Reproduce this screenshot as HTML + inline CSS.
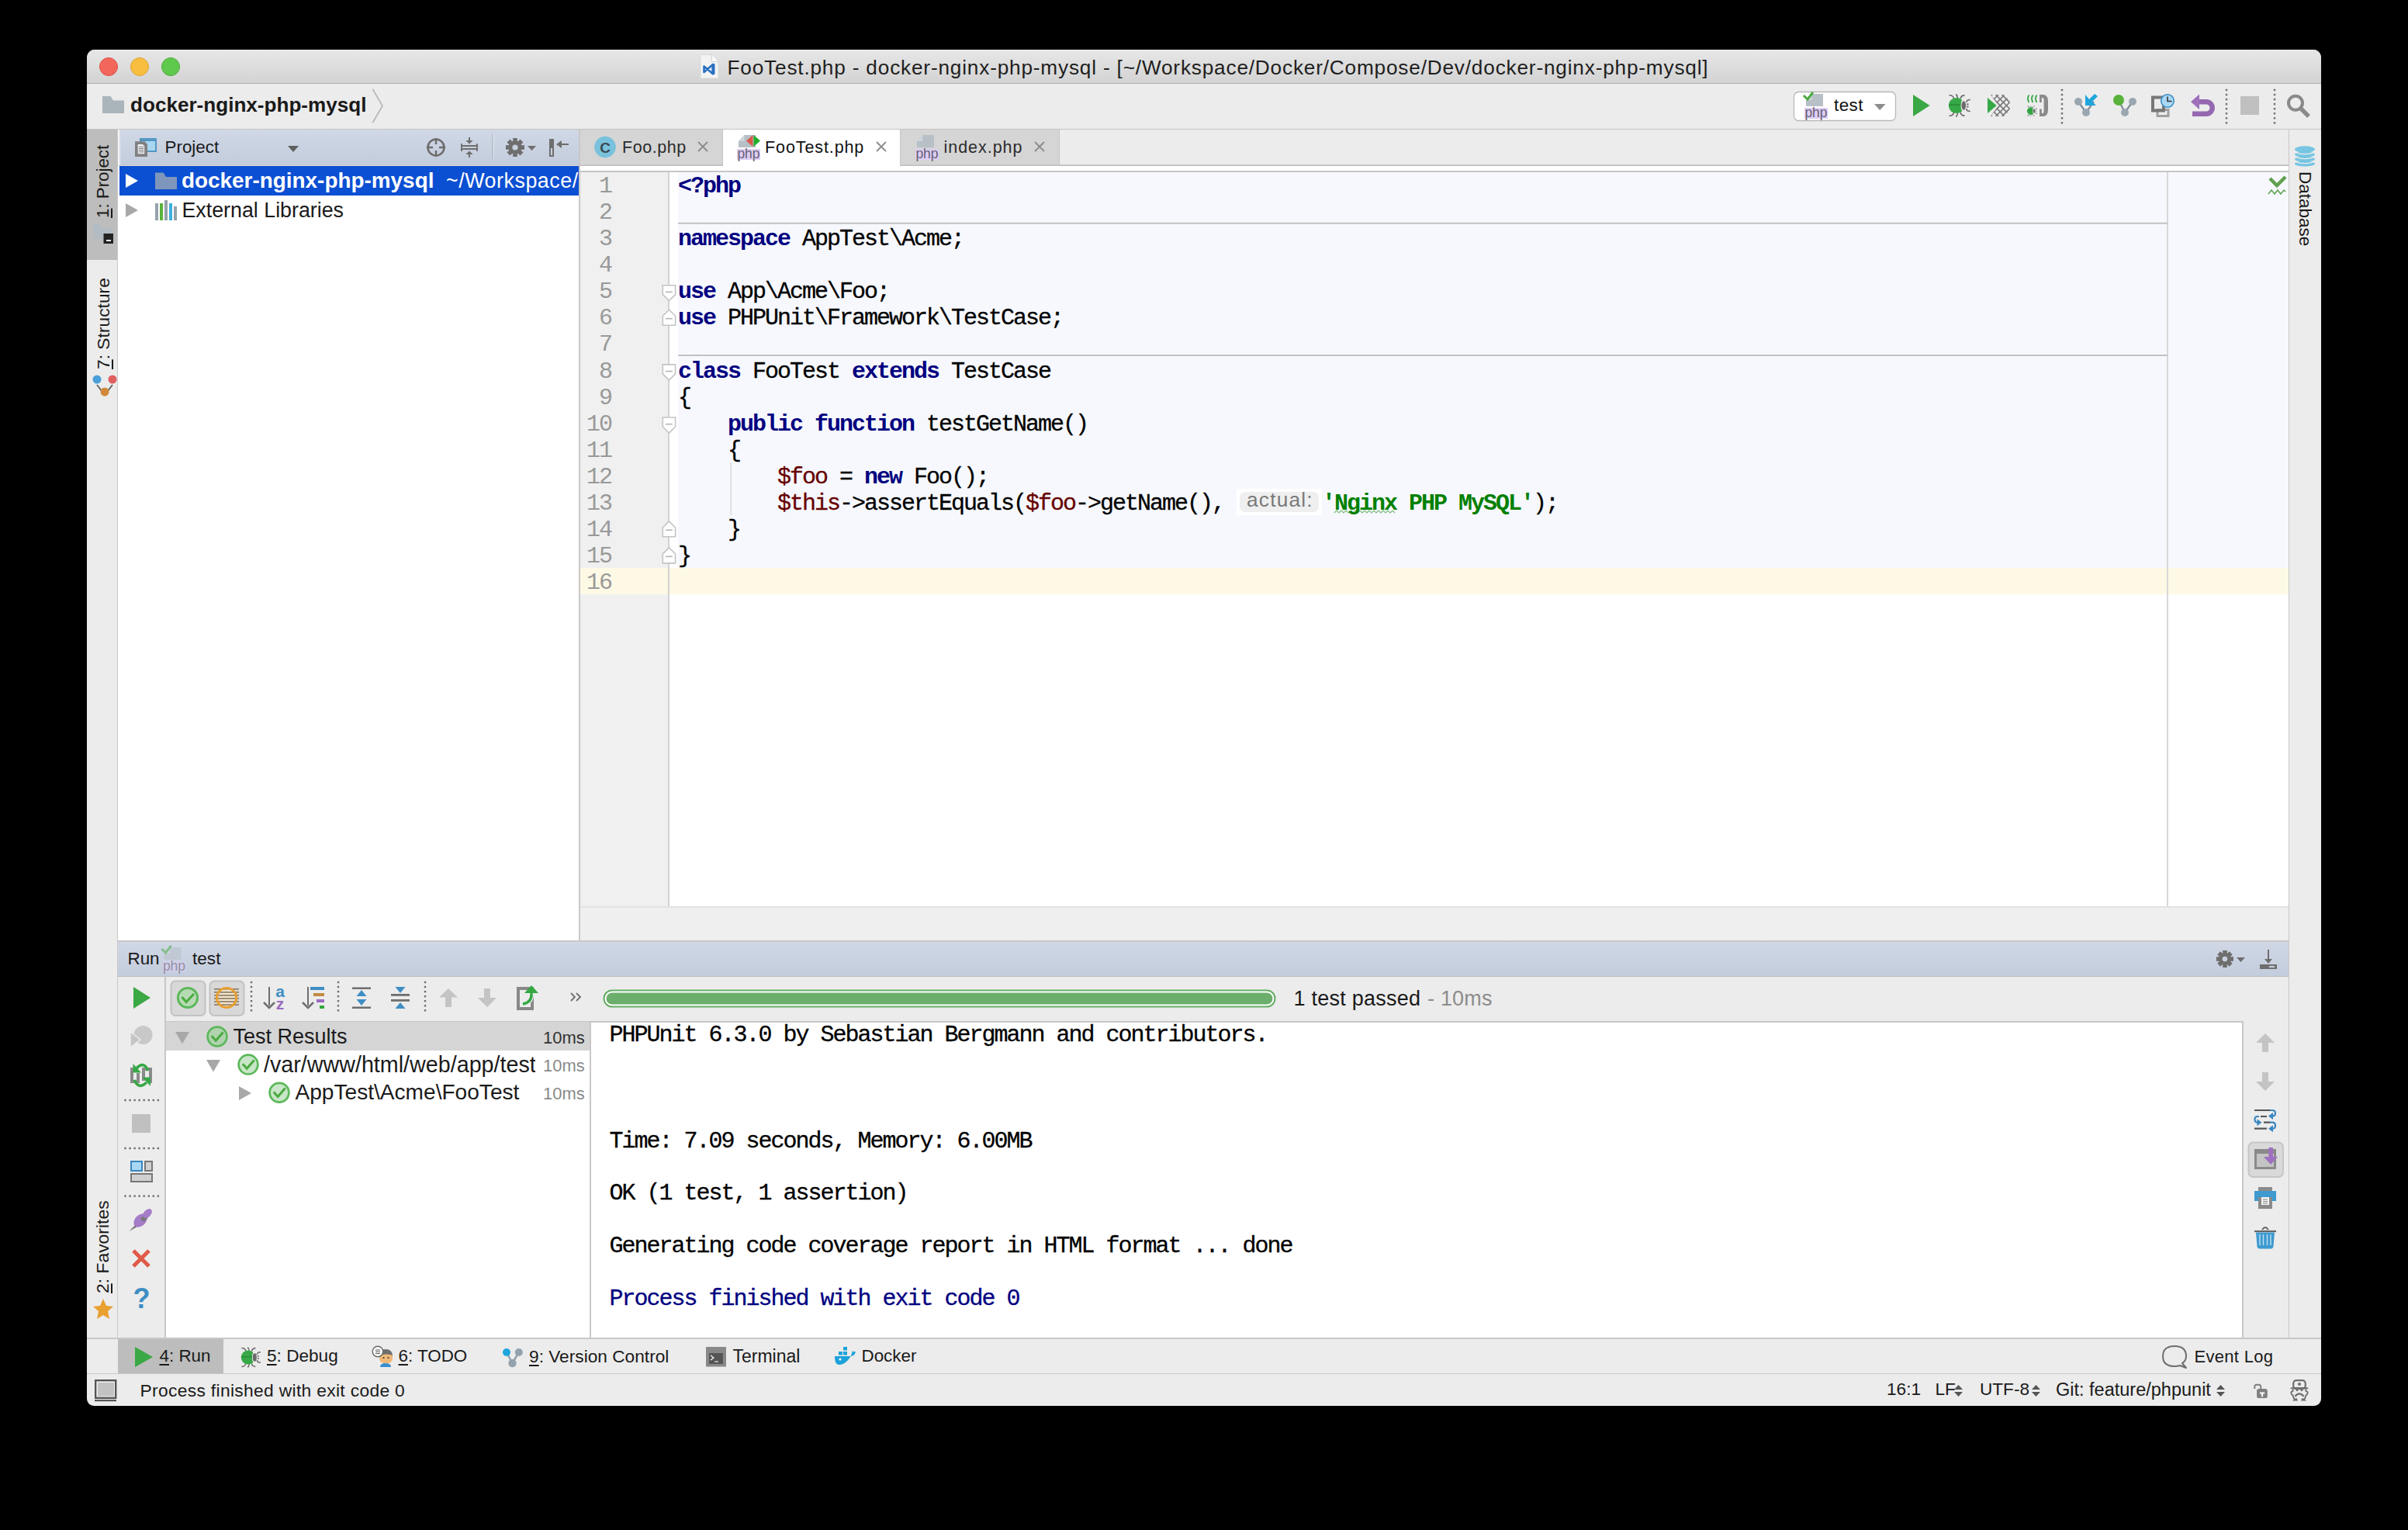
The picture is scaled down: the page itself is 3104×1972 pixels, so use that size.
<!DOCTYPE html>
<html><head><meta charset="utf-8">
<style>
html,body{margin:0;padding:0;background:#000;width:3104px;height:1972px;overflow:hidden}
*{box-sizing:border-box}
.a{position:absolute}
body{font-family:"Liberation Sans",sans-serif;color:#1a1a1a}
.t{position:absolute;white-space:pre;line-height:1}
.mono{font-family:"Liberation Mono",monospace;-webkit-text-stroke:0.3px currentColor}
.kw{color:#000080;font-weight:bold;-webkit-text-stroke:0}
.vr{color:#660000}
.st{color:#008000;font-weight:bold;-webkit-text-stroke:0}
</style></head>
<body>
<div class="a" style="left:112px;top:64px;width:2880px;height:1748px;background:#ececec;border-radius:10px 10px 9px 9px;overflow:hidden">
<div class="a" style="left:0;top:0;width:2880px;height:44px;background:linear-gradient(#e7e7e7,#d3d3d3);border-bottom:1px solid #b1b1b1"></div>
</div>
<div class="a" style="left:128px;top:74px;width:24px;height:24px;background:#f2665b;border-radius:50%;border:1px solid #df5045"></div>
<div class="a" style="left:168px;top:74px;width:24px;height:24px;background:#f8be3f;border-radius:50%;border:1px solid #dfa237"></div>
<div class="a" style="left:208px;top:74px;width:24px;height:24px;background:#5fc94d;border-radius:50%;border:1px solid #4bab3b"></div>
<div class="a" style="left:112px;top:166px;width:2880px;height:1px;background:#c4c4c4;"></div>
<div class="a" style="left:151px;top:167px;width:1px;height:1558px;background:#c8c8c8;"></div>
<div class="a" style="left:112px;top:167px;width:39px;height:168px;background:#bdbdbd;"></div>
<div class="a" style="left:152px;top:167px;width:594px;height:46px;background:linear-gradient(#d0d8e6,#c3ccdc);"></div>
<div class="a" style="left:152px;top:213px;width:594px;height:1px;background:#d6d2cc;"></div>
<div class="a" style="left:152px;top:167px;width:1.5px;height:46px;background:#f4f4f4;"></div>
<div class="a" style="left:153.5px;top:167px;width:2.5px;height:46px;background:#d3dae8;"></div>
<div class="a" style="left:152px;top:214px;width:594px;height:998px;background:#fff;"></div>
<div class="a" style="left:153.5px;top:214px;width:592.5px;height:38px;background:#0b4fd3;"></div>
<div class="a" style="left:746px;top:167px;width:2px;height:1047px;background:#c8c8c8;"></div>
<div class="a" style="left:748px;top:213px;width:2202px;height:1px;background:#c2c2c2;"></div>
<div class="a" style="left:748px;top:212px;width:2202px;height:1px;background:#c8c8c8;"></div>
<div class="a" style="left:748px;top:167px;width:183px;height:45px;background:#d5d5d5;"></div>
<div class="a" style="left:931px;top:167px;width:1px;height:45px;background:#c6c6c6;"></div>
<div class="a" style="left:932px;top:167px;width:228px;height:48px;background:#fff;"></div>
<div class="a" style="left:1160px;top:167px;width:1px;height:45px;background:#c6c6c6;"></div>
<div class="a" style="left:1161px;top:167px;width:204px;height:45px;background:#d5d5d5;"></div>
<div class="a" style="left:1365px;top:167px;width:1px;height:45px;background:#c6c6c6;"></div>
<div class="a" style="left:748px;top:214px;width:2202px;height:6px;background:#fff;"></div>
<div class="a" style="left:932px;top:212px;width:228px;height:2px;background:#fff;"></div>
<div class="a" style="left:748px;top:220px;width:2202px;height:2px;background:#c6c6c6;"></div>
<div class="a" style="left:748px;top:222px;width:2202px;height:946px;background:#fff;"></div>
<div class="a" style="left:748px;top:222px;width:113px;height:946px;background:#f0f0f0;"></div>
<div class="a" style="left:861px;top:222px;width:2px;height:946px;background:#d2d2d2;"></div>
<div class="a" style="left:874px;top:222px;width:2076px;height:510px;background:#f6f8fd;"></div>
<div class="a" style="left:748px;top:732px;width:2202px;height:34px;background:#fef9e5;"></div>
<div class="a" style="left:861px;top:732px;width:2px;height:34px;background:#d2d2d2;"></div>
<div class="a" style="left:2793px;top:222px;width:2px;height:946px;background:#d8d8d8;"></div>
<div class="a" style="left:748px;top:1168px;width:2202px;height:2px;background:#e2e2e2;"></div>
<div class="a" style="left:748px;top:1170px;width:2202px;height:42px;background:#efefef;"></div>
<div class="a" style="left:861px;top:1170px;width:0px;height:0px;background:#000;"></div>
<div class="a" style="left:2950px;top:167px;width:1px;height:1558px;background:#c8c8c8;"></div>
<div class="a" style="left:152px;top:1212px;width:2798px;height:2px;background:#c8c8c8;"></div>
<div class="a" style="left:152px;top:1214px;width:2798px;height:45px;background:linear-gradient(#d0d8e6,#c3ccdc);"></div>
<div class="a" style="left:152px;top:1257.5px;width:2798px;height:1.5px;background:#bcbcbc;"></div>
<div class="a" style="left:212px;top:1259px;width:2px;height:466px;background:#c8c8c8;"></div>
<div class="a" style="left:214px;top:1316px;width:546px;height:1px;background:#c8c8c8;"></div>
<div class="a" style="left:214px;top:1317px;width:546px;height:408px;background:#fff;"></div>
<div class="a" style="left:214px;top:1317px;width:546px;height:37px;background:#d5d5d5;"></div>
<div class="a" style="left:760px;top:1316px;width:2px;height:409px;background:#c8c8c8;"></div>
<div class="a" style="left:762px;top:1316px;width:2128px;height:2px;background:#c8c8c8;"></div>
<div class="a" style="left:762px;top:1318px;width:2128px;height:407px;background:#fff;"></div>
<div class="a" style="left:2890px;top:1316px;width:2px;height:409px;background:#c8c8c8;"></div>
<div class="a" style="left:112px;top:1724px;width:2880px;height:2px;background:#c8c8c8;"></div>
<div class="a" style="left:152px;top:1726px;width:136px;height:44px;background:#bdbdbd;"></div>
<div class="a" style="left:112px;top:1770px;width:2880px;height:1px;background:#c8c8c8;"></div>
<svg class="a" style="left:0;top:0" width="3104" height="1972" viewBox="0 0 3104 1972"><path d="M903,70.5 L917.2,70.5 L926,79.6 L926,101 L903,101 Z" fill="#f3f3f3" stroke="#d6d6d6" stroke-width="0.8"/><path d="M917.2,70.5 L917.5,79.3 L926,79.6" fill="#fbfbfb" stroke="#c8c8c8" stroke-width="0.8"/><path d="M907.5,85.5 L907.5,93 L919,83 L919,95.3 Z" fill="none" stroke="#2a70c0" stroke-width="2.6" stroke-linejoin="round"/><rect x="917.5" y="82" width="4" height="14" rx="1.5" fill="#2a70c0"/><path d="M132,124 L142.64,124 L146.0,129.544 L160,129.544 L160,146 L132,146 Z" fill="#aab4bb"/><path d="M480.5,115 L493,136.5 L480.5,158" fill="none" stroke="#b4b4b4" stroke-width="1.6"/><rect x="2312.5" y="118.5" width="131" height="37" rx="6" fill="#fff" stroke="#b8b8b8" stroke-width="1.3"/><path d="M2328,129 L2335.5,121 L2350,121 L2350,137 L2328,137 Z" fill="#b7c0c7"/><path d="M2328,129 L2335.5,121 L2335.5,129 Z" fill="#cfd5da"/><rect x="2326" y="139" width="30" height="14" fill="#dccdf5"/><text x="2341" y="150.5" font-family="Liberation Sans" font-size="17.5" fill="#67606f" text-anchor="middle">php</text><path d="M2325,123 L2330,128 L2337,119" fill="none" stroke="#4aab3f" stroke-width="3"/><path d="M2416,134 L2430.5,134 L2423.2,142 Z" fill="#8c8c8c"/><path d="M2466,122 L2487.6,136 L2466,150 Z" fill="#3aa844"/><g transform="translate(2511,121) scale(1.0)"><path d="M1.5,1.8 q5,-0.5 6.5,5 M10.3,0.5 q2.2,2 2.3,5.5 M21.5,1.8 q-4.5,0 -5.5,4.5 M1.5,28.2 q5,0.5 6.5,-5 M10.3,29.5 q2.2,-2 2.3,-5.5 M21.5,28.2 q-4.5,0 -5.5,-4.5" fill="none" stroke="#6e6e6e" stroke-width="1.7"/><circle cx="11" cy="15" r="10.1" fill="#36a846"/><rect x="1" y="13.4" width="19" height="1.6" fill="#2a8c38"/><ellipse cx="21.5" cy="15" rx="5" ry="9.5" fill="#ececec"/><ellipse cx="20.3" cy="15" rx="2.8" ry="5.8" fill="#6b6b6b"/><path d="M23.8,11 q0,-3.5 5,-3.5 M23.8,19 q0,3.5 5,3.5 M24,13.4 h2.6 M24,16.6 h2.6" fill="none" stroke="#6e6e6e" stroke-width="1.7"/></g><path d="M2562,126 L2573.7,136 L2562,146 Z" fill="#36a846"/><clipPath id="covc"><path d="M2566,122 L2583,122 L2590.5,130 L2590.5,142 L2583,150 L2566,150 L2576,136 Z"/></clipPath><g clip-path="url(#covc)" stroke="#7a7a7a" stroke-width="1.7"><path d="M2540.0,122 l28,28 M2540.0,150 l28,-28"/><path d="M2548.1,122 l28,28 M2548.1,150 l28,-28"/><path d="M2556.2,122 l28,28 M2556.2,150 l28,-28"/><path d="M2564.3,122 l28,28 M2564.3,150 l28,-28"/><path d="M2572.4,122 l28,28 M2572.4,150 l28,-28"/><path d="M2580.5,122 l28,28 M2580.5,150 l28,-28"/><path d="M2588.6,122 l28,28 M2588.6,150 l28,-28"/><path d="M2596.7,122 l28,28 M2596.7,150 l28,-28"/></g><rect x="2629" y="122" width="2.8" height="10" fill="#8a8a8a"/><rect x="2629" y="140.5" width="2.8" height="9.5" fill="#8a8a8a"/><path d="M2631,122 h2.5 q6.5,0 6.5,8.5 v11 q0,8.5 -6.5,8.5 h-2.5 v-4 h2 q1.6,0 1.6,-2.5 v-15 q0,-2.5 -1.6,-2.5 h-2 z" fill="#8a8a8a"/><path d="M2615.5,122.5 q-3,4.5 0,9.5 M2620.5,122.5 q-3,4.5 0,9.5 M2625.5,122.5 q-3,4.5 0,9.5" fill="none" stroke="#36a846" stroke-width="1.8"/><g transform="translate(2612.5,136) scale(0.47)"><path d="M1.5,1.8 q5,-0.5 6.5,5 M10.3,0.5 q2.2,2 2.3,5.5 M21.5,1.8 q-4.5,0 -5.5,4.5 M1.5,28.2 q5,0.5 6.5,-5 M10.3,29.5 q2.2,-2 2.3,-5.5 M21.5,28.2 q-4.5,0 -5.5,-4.5" fill="none" stroke="#6e6e6e" stroke-width="1.7"/><circle cx="11" cy="15" r="10.1" fill="#36a846"/><rect x="1" y="13.4" width="19" height="1.6" fill="#2a8c38"/><ellipse cx="21.5" cy="15" rx="5" ry="9.5" fill="#ececec"/><ellipse cx="20.3" cy="15" rx="2.8" ry="5.8" fill="#6b6b6b"/><path d="M23.8,11 q0,-3.5 5,-3.5 M23.8,19 q0,3.5 5,3.5 M24,13.4 h2.6 M24,16.6 h2.6" fill="none" stroke="#6e6e6e" stroke-width="1.7"/></g><rect x="2656.80" y="114.80" width="2.4" height="2.4" fill="#6e6e6e"/><rect x="2656.80" y="120.85" width="2.4" height="2.4" fill="#6e6e6e"/><rect x="2656.80" y="126.90" width="2.4" height="2.4" fill="#6e6e6e"/><rect x="2656.80" y="132.95" width="2.4" height="2.4" fill="#6e6e6e"/><rect x="2656.80" y="139.00" width="2.4" height="2.4" fill="#6e6e6e"/><rect x="2656.80" y="145.05" width="2.4" height="2.4" fill="#6e6e6e"/><rect x="2656.80" y="151.10" width="2.4" height="2.4" fill="#6e6e6e"/><rect x="2656.80" y="157.15" width="2.4" height="2.4" fill="#6e6e6e"/><path d="M2679,131 L2689,145 L2699,131" fill="none" stroke="#7f8d97" stroke-width="2.2"/><circle cx="2679" cy="131" r="5" fill="#9aa7b0"/><circle cx="2689" cy="145" r="5" fill="#9aa7b0"/><path d="M2688,122 L2688,136 L2702,136 L2697,131 L2704,124 L2700,121 L2693,128 Z" fill="#1ea5dc"/><path d="M2731,129 L2739,145 L2749,131" fill="none" stroke="#7f8d97" stroke-width="2.2"/><circle cx="2731" cy="129" r="7" fill="#59b33a"/><circle cx="2749" cy="131" r="5" fill="#9aa7b0"/><circle cx="2739" cy="145" r="5" fill="#9aa7b0"/><path d="M2781,141.5 h14 v8 h-14 z" fill="none" stroke="#a0a0a0" stroke-width="3"/><rect x="2775" y="125.5" width="14" height="17" fill="none" stroke="#777" stroke-width="4"/><circle cx="2794" cy="130" r="8.3" fill="#a8d8f5" stroke="#3d8fc4" stroke-width="1.6"/><path d="M2794,124.5 L2794,130.5 L2799.5,130.5" fill="none" stroke="#333" stroke-width="1.6"/><path d="M2833,131.3 H2844 A7.7,7.7 0 0 1 2844,146.7 H2826" fill="none" stroke="#9467b0" stroke-width="6.5"/><path d="M2824,131.3 L2835,121.5 L2835,141 Z" fill="#9f70bb"/><rect x="2868.80" y="114.80" width="2.4" height="2.4" fill="#6e6e6e"/><rect x="2868.80" y="120.85" width="2.4" height="2.4" fill="#6e6e6e"/><rect x="2868.80" y="126.90" width="2.4" height="2.4" fill="#6e6e6e"/><rect x="2868.80" y="132.95" width="2.4" height="2.4" fill="#6e6e6e"/><rect x="2868.80" y="139.00" width="2.4" height="2.4" fill="#6e6e6e"/><rect x="2868.80" y="145.05" width="2.4" height="2.4" fill="#6e6e6e"/><rect x="2868.80" y="151.10" width="2.4" height="2.4" fill="#6e6e6e"/><rect x="2868.80" y="157.15" width="2.4" height="2.4" fill="#6e6e6e"/><rect x="2888" y="124" width="24" height="24" fill="#c0c0c0"/><rect x="2930.80" y="114.80" width="2.4" height="2.4" fill="#6e6e6e"/><rect x="2930.80" y="120.85" width="2.4" height="2.4" fill="#6e6e6e"/><rect x="2930.80" y="126.90" width="2.4" height="2.4" fill="#6e6e6e"/><rect x="2930.80" y="132.95" width="2.4" height="2.4" fill="#6e6e6e"/><rect x="2930.80" y="139.00" width="2.4" height="2.4" fill="#6e6e6e"/><rect x="2930.80" y="145.05" width="2.4" height="2.4" fill="#6e6e6e"/><rect x="2930.80" y="151.10" width="2.4" height="2.4" fill="#6e6e6e"/><rect x="2930.80" y="157.15" width="2.4" height="2.4" fill="#6e6e6e"/><circle cx="2959" cy="132.7" r="9" fill="none" stroke="#8a8a8a" stroke-width="4"/><path d="M2965,139 L2976,150" stroke="#8a8a8a" stroke-width="5.5"/><path d="M120,289 L129.88,289 L133.0,293.788 L146,293.788 L146,308 L120,308 Z" fill="#b3bcc3"/><rect x="133.5" y="301" width="12.5" height="13" fill="#222"/><rect x="137" y="309" width="6" height="2" fill="#fff"/><path d="M125,496 L135,509 L145,496" fill="none" stroke="#666" stroke-width="2"/><circle cx="125" cy="489" r="5.5" fill="#4a9fd8"/><circle cx="145" cy="489" r="5.5" fill="#e06060"/><circle cx="135" cy="505" r="5.5" fill="#d08a3a"/><path d="M133,1674 L137,1683 L146,1684 L139,1690 L141,1700 L133,1695 L125,1700 L127,1690 L120,1684 L129,1683 Z" fill="#e8a030"/><rect x="180" y="178" width="22" height="18" fill="#5497c2"/><rect x="182" y="182" width="18" height="12" fill="#a8d6f2"/><path d="M174,182.2 L186.5,182.2 L190,186 L190,202 L174,202 Z" fill="#808080"/><path d="M177.7,186 L184,186 L186.2,188.5 L186.2,198.2 L177.7,198.2 Z" fill="#eef0f2"/><path d="M178.8,189.3 h6.5 M178.8,191.5 h6.5 M178.8,193.7 h6.5 M178.8,195.9 h6.5" stroke="#7a7a7a" stroke-width="1"/><path d="M371,188 L385,188 L378,196 Z" fill="#5f5f5f"/><circle cx="562" cy="190" r="10.5" fill="none" stroke="#6e6e6e" stroke-width="2.6"/><path d="M562,178 v8 M562,194 v8 M550,190 h8 M566,190 h8" stroke="#6e6e6e" stroke-width="2.6"/><path d="M594,188 h22 M594,192 h22" stroke="#6e6e6e" stroke-width="2.2"/><path d="M595,185 v10 M615,185 v10" stroke="#6e6e6e" stroke-width="1.8"/><path d="M605,177 v5 M605,199 v4" stroke="#6e6e6e" stroke-width="2"/><path d="M600.3,181 L609.7,181 L605,185.5 Z M600.3,199 L609.7,199 L605,194.5 Z" fill="#6e6e6e"/><path d="M635,172 v33" stroke="#b4bac6" stroke-width="1.4"/><path d="M636.4,172 v33" stroke="#e2e7ef" stroke-width="1"/><rect x="661.2" y="178" width="5.6" height="24" transform="rotate(0 664 190)" fill="#6e6e6e"/><rect x="661.2" y="178" width="5.6" height="24" transform="rotate(45 664 190)" fill="#6e6e6e"/><rect x="661.2" y="178" width="5.6" height="24" transform="rotate(90 664 190)" fill="#6e6e6e"/><rect x="661.2" y="178" width="5.6" height="24" transform="rotate(135 664 190)" fill="#6e6e6e"/><circle cx="664" cy="190" r="8.64" fill="#6e6e6e"/><circle cx="664" cy="190" r="3.5999999999999996" fill="#c9d1e0"/><path d="M680,188 L691,188 L685.5,194 Z" fill="#6e6e6e"/><rect x="708" y="179" width="6" height="23" fill="#6e6e6e"/><rect x="710" y="191" width="2" height="9" fill="#c9d1e0"/><path d="M718,186 h15" stroke="#6e6e6e" stroke-width="2"/><path d="M717,186 L724,181 L724,191 Z" fill="#6e6e6e"/><path d="M162,224 L178,233 L162,242 Z" fill="#fff"/><path d="M200,222.5 L210.64,222.5 L214.0,227.918 L228,227.918 L228,244.0 L200,244.0 Z" fill="#7f96bc"/><path d="M162,262 L178,271 L162,280 Z" fill="#a8a8a8"/><rect x="200" y="262" width="4" height="22" fill="#96a2ab"/><rect x="206" y="262" width="4" height="22" fill="#59b33a"/><rect x="212" y="258" width="4" height="26" fill="#96a2ab"/><rect x="218" y="262" width="4" height="22" fill="#3ab0e0"/><rect x="224" y="266" width="4" height="18" fill="#96a2ab"/><circle cx="780" cy="189.6" r="13.8" fill="#7ac2dc"/><text x="780" y="197" font-family="Liberation Sans" font-weight="bold" font-size="19" fill="#3a4a55" text-anchor="middle">C</text><path d="M900,183 l12,12 M912,183 l-12,12" stroke="#8c8c8c" stroke-width="1.8"/><path d="M952,182 L959.5,174 L974,174 L974,190 L952,190 Z" fill="#b7c0c7"/><path d="M952,182 L959.5,174 L959.5,182 Z" fill="#cfd5da"/><rect x="950" y="192" width="30" height="14" fill="#dccdf5"/><text x="965" y="203.5" font-family="Liberation Sans" font-size="17.5" fill="#67606f" text-anchor="middle">php</text><path d="M970.5,174 L962,181.5 L970.5,189 Z" fill="#d9594a"/><path d="M971.5,174 L980,181.5 L971.5,189 Z" fill="#1fae2a"/><path d="M1130,183 l12,12 M1142,183 l-12,12" stroke="#8c8c8c" stroke-width="1.8"/><path d="M1182,182 L1189.5,174 L1204,174 L1204,190 L1182,190 Z" fill="#b7c0c7"/><path d="M1182,182 L1189.5,174 L1189.5,182 Z" fill="#cfd5da"/><rect x="1180" y="192" width="30" height="14" fill="#dccdf5"/><text x="1195" y="203.5" font-family="Liberation Sans" font-size="17.5" fill="#67606f" text-anchor="middle">php</text><path d="M1334,183 l12,12 M1346,183 l-12,12" stroke="#8c8c8c" stroke-width="1.8"/><path d="M854.3,367.68 L870.6,367.68 L870.6,379.68 L862.45,387.68 L854.3,379.68 Z" fill="#fff" stroke="#c4c4c4" stroke-width="1.6"/><path d="M858.0999999999999,376.38 h8.6" stroke="#b8b8b8" stroke-width="1.7"/><path d="M854.3,419.25 L870.6,419.25 L870.6,407.25 L862.45,399.25 L854.3,407.25 Z" fill="#fff" stroke="#c4c4c4" stroke-width="1.6"/><path d="M858.0999999999999,410.65 h8.6" stroke="#b8b8b8" stroke-width="1.7"/><path d="M854.3,469.89 L870.6,469.89 L870.6,481.89 L862.45,489.89 L854.3,481.89 Z" fill="#fff" stroke="#c4c4c4" stroke-width="1.6"/><path d="M858.0999999999999,478.59 h8.6" stroke="#b8b8b8" stroke-width="1.7"/><path d="M854.3,538.03 L870.6,538.03 L870.6,550.03 L862.45,558.03 L854.3,550.03 Z" fill="#fff" stroke="#c4c4c4" stroke-width="1.6"/><path d="M858.0999999999999,546.73 h8.6" stroke="#b8b8b8" stroke-width="1.7"/><path d="M854.3,691.8100000000001 L870.6,691.8100000000001 L870.6,679.8100000000001 L862.45,671.8100000000001 L854.3,679.8100000000001 Z" fill="#fff" stroke="#c4c4c4" stroke-width="1.6"/><path d="M858.0999999999999,683.21 h8.6" stroke="#b8b8b8" stroke-width="1.7"/><path d="M854.3,725.88 L870.6,725.88 L870.6,713.88 L862.45,705.88 L854.3,713.88 Z" fill="#fff" stroke="#c4c4c4" stroke-width="1.6"/><path d="M858.0999999999999,717.28 h8.6" stroke="#b8b8b8" stroke-width="1.7"/><rect x="874" y="286.8" width="1920" height="2" fill="#c2c2c2"/><rect x="874" y="457" width="1920" height="2" fill="#c2c2c2"/><rect x="941.5" y="596" width="1.5" height="68" fill="#d8d8d8"/><path d="M1720,661 l3,-3 l3,3 l3,-3 l3,3 l3,-3 l3,3 l3,-3 l3,3 l3,-3 l3,3 l3,-3 l3,3 l3,-3 l3,3 l3,-3 l3,3 l3,-3 l3,3 l3,-3 l3,3 l3,-3 l3,3 l3,-3 l3,3 l3,-3 l3,3" fill="none" stroke="#7cbb7c" stroke-width="1.2"/><path d="M2926,230 L2935,239 L2946,228" fill="none" stroke="#5fa04e" stroke-width="4.5"/><path d="M2924,250 l4,-5 l4,5 l4,-5 l4,5 l4,-5 l2,2" fill="none" stroke="#5fa04e" stroke-width="1.5"/><ellipse cx="2971" cy="192.5" rx="13" ry="4.2" fill="#76c5e2"/><ellipse cx="2971" cy="199" rx="13" ry="3.6" fill="#76c5e2"/><ellipse cx="2971" cy="205" rx="13" ry="3.6" fill="#76c5e2"/><ellipse cx="2971" cy="211" rx="13" ry="3.6" fill="#76c5e2"/><path d="M2958,196.2 Q2971,201.2 2984,196.2" fill="none" stroke="#ececec" stroke-width="1.2"/><path d="M2958,202.2 Q2971,207.2 2984,202.2" fill="none" stroke="#ececec" stroke-width="1.2"/><path d="M2958,208.2 Q2971,213.2 2984,208.2" fill="none" stroke="#ececec" stroke-width="1.2"/><g opacity="0.55"><path d="M211.5,1229 L219.0,1221 L233.5,1221 L233.5,1237 L211.5,1237 Z" fill="#b7c0c7"/><path d="M211.5,1229 L219.0,1221 L219.0,1229 Z" fill="#cfd5da"/><rect x="209.5" y="1239" width="30" height="14" fill="#dccdf5"/><text x="224.5" y="1250.5" font-family="Liberation Sans" font-size="17.5" fill="#67606f" text-anchor="middle">php</text><path d="M208.5,1223 L213.5,1228 L220.5,1219" fill="none" stroke="#4aab3f" stroke-width="3"/></g><rect x="2865.2" y="1225" width="5.6" height="22" transform="rotate(0 2868 1236)" fill="#6e6e6e"/><rect x="2865.2" y="1225" width="5.6" height="22" transform="rotate(45 2868 1236)" fill="#6e6e6e"/><rect x="2865.2" y="1225" width="5.6" height="22" transform="rotate(90 2868 1236)" fill="#6e6e6e"/><rect x="2865.2" y="1225" width="5.6" height="22" transform="rotate(135 2868 1236)" fill="#6e6e6e"/><circle cx="2868" cy="1236" r="7.92" fill="#6e6e6e"/><circle cx="2868" cy="1236" r="3.3" fill="#c9d1e0"/><path d="M2883,1234 L2894,1234 L2888.5,1240 Z" fill="#6e6e6e"/><path d="M2924,1224 v16" stroke="#6e6e6e" stroke-width="2"/><path d="M2919,1236 L2929,1236 L2924,1242 Z" fill="#6e6e6e"/><rect x="2913" y="1243" width="22" height="6" fill="#6e6e6e"/><rect x="2925" y="1245" width="7" height="2" fill="#c9d1e0"/><path d="M172,1272 L194,1286 L172,1300 Z" fill="#3aa844"/><circle cx="184.5" cy="1334" r="12" fill="#c8c8c8"/><path d="M168,1330 L181,1340 L168,1350 Z" fill="#c4c4c4" stroke="#ececec" stroke-width="1.5"/><path d="M170,1376 V1394 H178 V1383 M185,1393 V1378 H194 V1396" fill="none" stroke="#8a8a8a" stroke-width="4"/><path d="M191,1380 Q185,1367 176,1377" fill="none" stroke="#36a846" stroke-width="3.6"/><path d="M171.5,1371 L171.5,1382.5 L182,1382.5 Z" fill="#36a846"/><path d="M173,1392 Q179,1405 189,1395" fill="none" stroke="#36a846" stroke-width="3.6"/><path d="M194,1388.5 L194,1400 L183.5,1388.5 Z" fill="#36a846"/><rect x="160.30" y="1416.80" width="2.4" height="2.4" fill="#6e6e6e"/><rect x="166.35" y="1416.80" width="2.4" height="2.4" fill="#6e6e6e"/><rect x="172.40" y="1416.80" width="2.4" height="2.4" fill="#6e6e6e"/><rect x="178.45" y="1416.80" width="2.4" height="2.4" fill="#6e6e6e"/><rect x="184.50" y="1416.80" width="2.4" height="2.4" fill="#6e6e6e"/><rect x="190.55" y="1416.80" width="2.4" height="2.4" fill="#6e6e6e"/><rect x="196.60" y="1416.80" width="2.4" height="2.4" fill="#6e6e6e"/><rect x="202.65" y="1416.80" width="2.4" height="2.4" fill="#6e6e6e"/><rect x="170" y="1436" width="24" height="24" fill="#c0c0c0"/><rect x="160.30" y="1478.80" width="2.4" height="2.4" fill="#6e6e6e"/><rect x="166.35" y="1478.80" width="2.4" height="2.4" fill="#6e6e6e"/><rect x="172.40" y="1478.80" width="2.4" height="2.4" fill="#6e6e6e"/><rect x="178.45" y="1478.80" width="2.4" height="2.4" fill="#6e6e6e"/><rect x="184.50" y="1478.80" width="2.4" height="2.4" fill="#6e6e6e"/><rect x="190.55" y="1478.80" width="2.4" height="2.4" fill="#6e6e6e"/><rect x="196.60" y="1478.80" width="2.4" height="2.4" fill="#6e6e6e"/><rect x="202.65" y="1478.80" width="2.4" height="2.4" fill="#6e6e6e"/><rect x="169" y="1497" width="14" height="12" fill="#a8d8f5" stroke="#3a86c0" stroke-width="2"/><rect x="187" y="1497" width="9" height="12" fill="#d0d0d0" stroke="#777" stroke-width="2"/><rect x="169" y="1513" width="27" height="10" fill="#d0d0d0" stroke="#777" stroke-width="2"/><rect x="160.30" y="1540.40" width="2.4" height="2.4" fill="#6e6e6e"/><rect x="166.35" y="1540.40" width="2.4" height="2.4" fill="#6e6e6e"/><rect x="172.40" y="1540.40" width="2.4" height="2.4" fill="#6e6e6e"/><rect x="178.45" y="1540.40" width="2.4" height="2.4" fill="#6e6e6e"/><rect x="184.50" y="1540.40" width="2.4" height="2.4" fill="#6e6e6e"/><rect x="190.55" y="1540.40" width="2.4" height="2.4" fill="#6e6e6e"/><rect x="196.60" y="1540.40" width="2.4" height="2.4" fill="#6e6e6e"/><rect x="202.65" y="1540.40" width="2.4" height="2.4" fill="#6e6e6e"/><path d="M166.5,1587 L180,1573 L184,1577 Z" fill="#777"/><ellipse cx="181" cy="1573" rx="10" ry="7" transform="rotate(-45 181 1573)" fill="#a57cc8"/><rect x="183" y="1566" width="6" height="8" transform="rotate(45 186 1570)" fill="#777"/><ellipse cx="190" cy="1564" rx="7" ry="4.5" transform="rotate(-45 190 1564)" fill="#a57cc8"/><path d="M172,1612 L192,1632 M192,1612 L172,1632" stroke="#e05a48" stroke-width="5"/><text x="182.5" y="1686" font-family="Liberation Sans" font-weight="bold" font-size="36" fill="#3e8ec4" text-anchor="middle">?</text><rect x="220.5" y="1264.5" width="44" height="44.5" rx="6" fill="#d8d8d8" stroke="#c2c2c2" stroke-width="2"/><rect x="270.5" y="1264.5" width="44" height="44.5" rx="6" fill="#d8d8d8" stroke="#c2c2c2" stroke-width="2"/><circle cx="242" cy="1286" r="12.6" fill="#b6dbb4" stroke="#5cb85b" stroke-width="3"/><path d="M234.5,1285 L240,1291.5 L250,1281" fill="none" stroke="#4aab3f" stroke-width="3"/><circle cx="292" cy="1286" r="12.6" fill="#f3e5cb"/><g stroke="#8d7c68" stroke-width="1.7"><path d="M276,1274.80 h32"/><path d="M276,1278.85 h32"/><path d="M276,1282.90 h32"/><path d="M276,1286.95 h32"/><path d="M276,1291.00 h32"/><path d="M276,1295.05 h32"/></g><circle cx="292" cy="1286" r="12.6" fill="none" stroke="#e8a030" stroke-width="3"/><rect x="322.80" y="1264.80" width="2.4" height="2.4" fill="#6e6e6e"/><rect x="322.80" y="1270.85" width="2.4" height="2.4" fill="#6e6e6e"/><rect x="322.80" y="1276.90" width="2.4" height="2.4" fill="#6e6e6e"/><rect x="322.80" y="1282.95" width="2.4" height="2.4" fill="#6e6e6e"/><rect x="322.80" y="1289.00" width="2.4" height="2.4" fill="#6e6e6e"/><rect x="322.80" y="1295.05" width="2.4" height="2.4" fill="#6e6e6e"/><rect x="322.80" y="1301.10" width="2.4" height="2.4" fill="#6e6e6e"/><path d="M347,1272 v24" stroke="#6e6e6e" stroke-width="2"/><path d="M340,1292 L347,1299 L354,1292" fill="none" stroke="#6e6e6e" stroke-width="2.5"/><text x="361" y="1284.5" font-family="Liberation Sans" font-weight="bold" font-size="21" fill="#3e8ec4" text-anchor="middle">a</text><text x="361" y="1300.5" font-family="Liberation Sans" font-weight="bold" font-size="21" fill="#9b6bbf" text-anchor="middle">z</text><path d="M397,1272 v24" stroke="#6e6e6e" stroke-width="2"/><path d="M390,1292 L397,1299 L404,1292" fill="none" stroke="#6e6e6e" stroke-width="2.5"/><rect x="400" y="1272" width="18" height="4" fill="#3e8ec4"/><rect x="404" y="1280" width="14" height="4" fill="#c38a40"/><rect x="408" y="1288" width="10" height="4" fill="#9b6bbf"/><rect x="412" y="1296" width="6" height="4" fill="#2fa83a"/><rect x="434.80" y="1264.80" width="2.4" height="2.4" fill="#6e6e6e"/><rect x="434.80" y="1270.85" width="2.4" height="2.4" fill="#6e6e6e"/><rect x="434.80" y="1276.90" width="2.4" height="2.4" fill="#6e6e6e"/><rect x="434.80" y="1282.95" width="2.4" height="2.4" fill="#6e6e6e"/><rect x="434.80" y="1289.00" width="2.4" height="2.4" fill="#6e6e6e"/><rect x="434.80" y="1295.05" width="2.4" height="2.4" fill="#6e6e6e"/><rect x="434.80" y="1301.10" width="2.4" height="2.4" fill="#6e6e6e"/><rect x="454" y="1272.5" width="24" height="2.5" fill="#6e6e6e"/><rect x="454" y="1297.5" width="24" height="2.5" fill="#6e6e6e"/><path d="M459.5,1284 L472.5,1284 L466,1276 Z M459.5,1288 L472.5,1288 L466,1296 Z" fill="#3e8ec4"/><rect x="504" y="1281" width="24" height="2.8" fill="#6e6e6e"/><rect x="504" y="1288" width="24" height="2.8" fill="#6e6e6e"/><path d="M509.5,1272 L522.5,1272 L516,1280 Z M509.5,1300 L522.5,1300 L516,1292 Z" fill="#3e8ec4"/><rect x="546.80" y="1264.80" width="2.4" height="2.4" fill="#6e6e6e"/><rect x="546.80" y="1270.85" width="2.4" height="2.4" fill="#6e6e6e"/><rect x="546.80" y="1276.90" width="2.4" height="2.4" fill="#6e6e6e"/><rect x="546.80" y="1282.95" width="2.4" height="2.4" fill="#6e6e6e"/><rect x="546.80" y="1289.00" width="2.4" height="2.4" fill="#6e6e6e"/><rect x="546.80" y="1295.05" width="2.4" height="2.4" fill="#6e6e6e"/><rect x="546.80" y="1301.10" width="2.4" height="2.4" fill="#6e6e6e"/><path d="M578,1274 L590,1285.5 L582,1285.5 L582,1298 L574,1298 L574,1285.5 L566,1285.5 Z" fill="#c4c4c4"/><path d="M628,1298 L640,1286 L632,1286 L632,1274 L624,1274 L624,1286 L616,1286 Z" fill="#c4c4c4"/><rect x="668" y="1274" width="18" height="26" fill="none" stroke="#888" stroke-width="4"/><path d="M674,1294 Q686,1292 685,1280" fill="none" stroke="#ececec" stroke-width="6"/><path d="M674,1294 Q686,1292 685,1280" fill="none" stroke="#34a843" stroke-width="3.5"/><path d="M676,1280 L685,1270 L694,1280 Z" fill="#34a843"/><path d="M736,1280 l5,5 l-5,5 M743,1280 l5,5 l-5,5" fill="none" stroke="#6e6e6e" stroke-width="1.8"/><rect x="778.5" y="1276.5" width="865" height="21" rx="10.5" fill="#fff" stroke="#63ad63" stroke-width="2"/><rect x="781.5" y="1279.5" width="859" height="15" rx="7.5" fill="#6cae6c"/><path d="M226,1330 L244,1330 L235,1345.5 Z" fill="#a8a8a8"/><circle cx="280" cy="1336" r="12.4" fill="#b0d3ae" stroke="#5cb85b" stroke-width="2.7"/><path d="M272.8,1335.2 L278.2,1341.2 L287.6,1330.4" fill="none" stroke="#4aab3f" stroke-width="3"/><path d="M266,1366 L284,1366 L275,1381.5 Z" fill="#a8a8a8"/><circle cx="320" cy="1372.1" r="12.4" fill="#c9e6c8" stroke="#5cb85b" stroke-width="2.7"/><path d="M312.8,1371.3 L318.2,1377.3 L327.6,1366.5" fill="none" stroke="#4aab3f" stroke-width="3"/><path d="M308,1400 L324,1409 L308,1418 Z" fill="#a8a8a8"/><circle cx="360" cy="1408.2" r="12.4" fill="#c9e6c8" stroke="#5cb85b" stroke-width="2.7"/><path d="M352.8,1407.4 L358.2,1413.4 L367.6,1402.6000000000001" fill="none" stroke="#4aab3f" stroke-width="3"/><path d="M2920,1332 L2932,1344 L2924,1344 L2924,1356 L2916,1356 L2916,1344 L2908,1344 Z" fill="#c4c4c4"/><path d="M2920,1406 L2932,1394 L2924,1394 L2924,1382 L2916,1382 L2916,1394 L2908,1394 Z" fill="#c4c4c4"/><path d="M2906,1431 h20 M2914,1439 h8 M2918,1446.7 h8 M2906,1454.7 h16" stroke="#555" stroke-width="2.2"/><path d="M2926,1431 h3 q4,0 4,3.8 q0,3.8 -4,3.8 h-2 M2912,1439 h-2 q-3.5,0 -3.5,3.8 q0,3.9 3.5,3.9 h1 M2926,1446.7 h3 q4,0 4,4 q0,4 -4,4 h-2" fill="none" stroke="#3a86c0" stroke-width="2.2"/><path d="M2924,1438.6 l6,-4.5 v9 z M2915.5,1446.7 l-6,-4.5 v9 z M2924,1454.7 l6,-4.5 v9 z" fill="#3a86c0"/><rect x="2898.5" y="1472.5" width="44.5" height="44.5" rx="6" fill="#d9d9d9" stroke="#c6c6c6" stroke-width="2"/><rect x="2906" y="1481" width="28" height="26" fill="#8a8a8a"/><rect x="2909" y="1487" width="22" height="17" fill="#c4c4c4"/><path d="M2927.2,1479 v13" stroke="#a070c0" stroke-width="5.5"/><path d="M2918,1491 L2936,1491 L2927.2,1501 Z" fill="#a070c0"/><rect x="2911" y="1530" width="18" height="6" fill="#8a8a8a"/><path d="M2906,1535 h28 v13 h-5 v-4 h-18 v4 h-5 z" fill="#3e9ad0"/><rect x="2911" y="1543" width="18" height="15" fill="#8a8a8a"/><rect x="2915" y="1543" width="10" height="10" fill="#f4f4f4"/><path d="M2917,1546 h6 M2917,1548.5 h6 M2917,1551 h6" stroke="#777" stroke-width="0.9"/><path d="M2906,1587 h28" stroke="#666" stroke-width="2.2"/><path d="M2916,1585 q4,-6 8,0" fill="none" stroke="#666" stroke-width="1.8"/><path d="M2908,1588.5 h24 l-1.5,18 q-0.5,3 -3.5,3 h-14 q-3,0 -3.5,-3 z" fill="#3e9ad0"/><path d="M2913,1591 v14 M2917.5,1591 v14 M2922.5,1591 v14 M2927,1591 v14" stroke="#bfe0f2" stroke-width="1.4"/><path d="M174,1736 L197,1749 L174,1762 Z" fill="#3aa844"/><g transform="translate(310,1736) scale(0.9)"><path d="M1.5,1.8 q5,-0.5 6.5,5 M10.3,0.5 q2.2,2 2.3,5.5 M21.5,1.8 q-4.5,0 -5.5,4.5 M1.5,28.2 q5,0.5 6.5,-5 M10.3,29.5 q2.2,-2 2.3,-5.5 M21.5,28.2 q-4.5,0 -5.5,-4.5" fill="none" stroke="#6e6e6e" stroke-width="1.7"/><circle cx="11" cy="15" r="10.1" fill="#36a846"/><rect x="1" y="13.4" width="19" height="1.6" fill="#2a8c38"/><ellipse cx="21.5" cy="15" rx="5" ry="9.5" fill="#ececec"/><ellipse cx="20.3" cy="15" rx="2.8" ry="5.8" fill="#6b6b6b"/><path d="M23.8,11 q0,-3.5 5,-3.5 M23.8,19 q0,3.5 5,3.5 M24,13.4 h2.6 M24,16.6 h2.6" fill="none" stroke="#6e6e6e" stroke-width="1.7"/></g><path d="M490,1762 q0,-5 7,-5 q7,0 7,5 z" fill="#3a8fd0"/><rect x="489" y="1742" width="17" height="15" rx="6" fill="#f0b878"/><path d="M489,1748 q-1,-9 8,-9 q9,0 9,9 l-2,-2 q-6,-1 -13,0 z" fill="#6e6e6e"/><path d="M493.5,1750 h2 M499.5,1750 h2" stroke="#333" stroke-width="1.5"/><circle cx="487" cy="1742" r="6.8" fill="#fff" stroke="#666" stroke-width="1.4"/><path d="M484,1740 h6 M484,1742.3 h6 M484,1744.6 h6" stroke="#555" stroke-width="1"/><path d="M653,1743 L660.5,1757 L668.8,1743" fill="none" stroke="#93a2ad" stroke-width="2.5"/><circle cx="653" cy="1743" r="5" fill="#1ea5dc"/><circle cx="668.8" cy="1743" r="5" fill="#93a2ad"/><circle cx="660.5" cy="1757" r="5.2" fill="#93a2ad"/><rect x="910" y="1736" width="26" height="25.5" fill="#888"/><rect x="914" y="1744" width="18" height="14" fill="#555"/><path d="M916,1747 l4,3 l-4,3 M921,1755 h5" fill="none" stroke="#fff" stroke-width="1.2"/><path d="M1076,1748 h20 q4,0 6,-3 l1,-3 q-3,1 -4,-1 q-2,8 -6,12 q-5,6 -12,6 q-5,0 -5,-11z" fill="#1ba2da"/><rect x="1081" y="1742" width="5" height="4.5" fill="#1ba2da"/><rect x="1087" y="1742" width="5" height="4.5" fill="#1ba2da"/><rect x="1087" y="1736" width="5" height="4.5" fill="#1ba2da"/><circle cx="1083" cy="1752" r="1.6" fill="#fff"/><path d="M2813,1757 q5,-3 5,-9 q0,-13 -15,-13 q-15,0 -15,13 q0,13 15,13 q4,0 7,-1 l8,3 z" fill="none" stroke="#6e6e6e" stroke-width="2" stroke-linejoin="round"/><rect x="123.2" y="1779.2" width="26" height="22.6" fill="#f4f4f4" stroke="#555" stroke-width="2.4"/><rect x="126" y="1782" width="21" height="17.5" fill="#c2c2c2"/><rect x="122" y="1804" width="28" height="2.2" fill="#555"/><path d="M2519,1791 l5.5,-6 l5.5,6 z M2519,1794 l5.5,6 l5.5,-6 z" fill="#555"/><path d="M2619,1791 l5.5,-6 l5.5,6 z M2619,1794 l5.5,6 l5.5,-6 z" fill="#555"/><path d="M2857,1791 l5.5,-6 l5.5,6 z M2857,1794 l5.5,6 l5.5,-6 z" fill="#555"/><path d="M2906.3,1790 v-2.5 q0,-2.8 2.8,-2.8 h2.4 q2.8,0 2.8,2.8 v2.8" fill="none" stroke="#808080" stroke-width="2"/><rect x="2909.1" y="1790" width="13.7" height="12" rx="2.6" fill="#808080"/><path d="M2913,1794.6 h6.2 v2 h-2.1 v3.6 h-2 v-3.6 h-2.1 z" fill="#fff"/><rect x="2956.2" y="1779.2" width="15.6" height="10.6" rx="4" fill="none" stroke="#6e6e6e" stroke-width="2.2"/><path d="M2951.5,1789.3 L2955,1788.1 L2973,1788.1 L2976.4,1789.3 L2973,1790.4 L2955,1790.4 Z" fill="#6e6e6e"/><circle cx="2964" cy="1784" r="2" fill="#6e6e6e"/><path d="M2959.6,1792 h2.8 M2965.6,1792 h2.8" stroke="#6e6e6e" stroke-width="1.8"/><path d="M2955.6,1790.5 v2.3 q-2.4,0.6 -2.2,2.8 q0.3,2 2,2.6 q0.8,3.6 2.8,5.6 M2972.4,1790.5 v2.3 q2.4,0.6 2.2,2.8 q-0.3,2 -2,2.6 q-0.8,3.6 -2.8,5.6" fill="none" stroke="#6e6e6e" stroke-width="1.8"/><path d="M2958.3,1799.8 q5.7,-7 11.4,0" fill="none" stroke="#6e6e6e" stroke-width="2.3"/><path d="M2955,1805.6 q1.5,-3 5.5,-3.6 l1.5,3.6 z M2973,1805.6 q-1.5,-3 -5.5,-3.6 l-1.5,3.6 z" fill="#6e6e6e"/></svg>
<div class="t" style="left:937.50px;top:74.12px;font-size:26.2px;color:#1e1e1e;font-weight:normal;letter-spacing:0.82px;">FooTest.php - docker-nginx-php-mysql - [~/Workspace/Docker/Compose/Dev/docker-nginx-php-mysql]</div>
<div class="t" style="left:168.00px;top:122.40px;font-size:26.1px;color:#1a1a1a;font-weight:bold;">docker-nginx-php-mysql</div>
<div class="t" style="left:212.50px;top:178.73px;font-size:22.4px;color:#1a1a1a;font-weight:normal;">Project</div>
<div class="t" style="left:234.00px;top:218.58px;font-size:27.9px;color:#fff;font-weight:bold;">docker-nginx-php-mysql</div>
<div class="t" style="left:575.00px;top:219.51px;font-size:26.8px;color:#fff;font-weight:normal;letter-spacing:0.55px;width:171px;overflow:hidden;height:40px">~/Workspace/</div>
<div class="t" style="left:234.50px;top:257.51px;font-size:26.8px;color:#1a1a1a;font-weight:normal;">External Libraries</div>
<div class="t" style="left:802.00px;top:180.20px;font-size:21.5px;color:#2b2b2b;font-weight:normal;letter-spacing:0.55px;">Foo.php</div>
<div class="t" style="left:986.00px;top:180.20px;font-size:21.5px;color:#111;font-weight:normal;letter-spacing:0.9px;">FooTest.php</div>
<div class="t" style="left:1216.50px;top:180.20px;font-size:21.5px;color:#2b2b2b;font-weight:normal;letter-spacing:0.97px;">index.php</div>
<div class="t mono" style="left:772.00px;top:225.02px;font-size:30px;color:#999999;letter-spacing:-2.0029px;-webkit-text-stroke:0">1</div>
<div class="t mono" style="left:772.00px;top:259.09px;font-size:30px;color:#999999;letter-spacing:-2.0029px;-webkit-text-stroke:0">2</div>
<div class="t mono" style="left:772.00px;top:293.16px;font-size:30px;color:#999999;letter-spacing:-2.0029px;-webkit-text-stroke:0">3</div>
<div class="t mono" style="left:772.00px;top:327.23px;font-size:30px;color:#999999;letter-spacing:-2.0029px;-webkit-text-stroke:0">4</div>
<div class="t mono" style="left:772.00px;top:361.30px;font-size:30px;color:#999999;letter-spacing:-2.0029px;-webkit-text-stroke:0">5</div>
<div class="t mono" style="left:772.00px;top:395.37px;font-size:30px;color:#999999;letter-spacing:-2.0029px;-webkit-text-stroke:0">6</div>
<div class="t mono" style="left:772.00px;top:429.44px;font-size:30px;color:#999999;letter-spacing:-2.0029px;-webkit-text-stroke:0">7</div>
<div class="t mono" style="left:772.00px;top:463.51px;font-size:30px;color:#999999;letter-spacing:-2.0029px;-webkit-text-stroke:0">8</div>
<div class="t mono" style="left:772.00px;top:497.58px;font-size:30px;color:#999999;letter-spacing:-2.0029px;-webkit-text-stroke:0">9</div>
<div class="t mono" style="left:756.00px;top:531.65px;font-size:30px;color:#999999;letter-spacing:-2.0029px;-webkit-text-stroke:0">10</div>
<div class="t mono" style="left:756.00px;top:565.72px;font-size:30px;color:#999999;letter-spacing:-2.0029px;-webkit-text-stroke:0">11</div>
<div class="t mono" style="left:756.00px;top:599.79px;font-size:30px;color:#999999;letter-spacing:-2.0029px;-webkit-text-stroke:0">12</div>
<div class="t mono" style="left:756.00px;top:633.86px;font-size:30px;color:#999999;letter-spacing:-2.0029px;-webkit-text-stroke:0">13</div>
<div class="t mono" style="left:756.00px;top:667.93px;font-size:30px;color:#999999;letter-spacing:-2.0029px;-webkit-text-stroke:0">14</div>
<div class="t mono" style="left:756.00px;top:702.00px;font-size:30px;color:#999999;letter-spacing:-2.0029px;-webkit-text-stroke:0">15</div>
<div class="t mono" style="left:756.00px;top:736.07px;font-size:30px;color:#999999;letter-spacing:-2.0029px;-webkit-text-stroke:0">16</div>
<div class="t mono" style="left:874.00px;top:225.02px;font-size:30px;color:#000;letter-spacing:-2.0029px;"><span class="kw">&lt;?php</span></div>
<div class="t mono" style="left:874.00px;top:293.16px;font-size:30px;color:#000;letter-spacing:-2.0029px;"><span class="kw">namespace</span> AppTest\Acme;</div>
<div class="t mono" style="left:874.00px;top:361.30px;font-size:30px;color:#000;letter-spacing:-2.0029px;"><span class="kw">use</span> App\Acme\Foo;</div>
<div class="t mono" style="left:874.00px;top:395.37px;font-size:30px;color:#000;letter-spacing:-2.0029px;"><span class="kw">use</span> PHPUnit\Framework\TestCase;</div>
<div class="t mono" style="left:874.00px;top:463.51px;font-size:30px;color:#000;letter-spacing:-2.0029px;"><span class="kw">class</span> FooTest <span class="kw">extends</span> TestCase</div>
<div class="t mono" style="left:874.00px;top:497.58px;font-size:30px;color:#000;letter-spacing:-2.0029px;">{</div>
<div class="t mono" style="left:874.00px;top:531.65px;font-size:30px;color:#000;letter-spacing:-2.0029px;">    <span class="kw">public</span> <span class="kw">function</span> testGetName()</div>
<div class="t mono" style="left:874.00px;top:565.72px;font-size:30px;color:#000;letter-spacing:-2.0029px;">    {</div>
<div class="t mono" style="left:874.00px;top:599.79px;font-size:30px;color:#000;letter-spacing:-2.0029px;">        <span class="vr">$foo</span> = <span class="kw">new</span> Foo();</div>
<div class="t mono" style="left:874.00px;top:633.86px;font-size:30px;color:#000;letter-spacing:-2.0029px;">        <span class="vr">$this</span>-&gt;assertEquals(<span class="vr">$foo</span>-&gt;getName(), </div>
<div class="t mono" style="left:874.00px;top:667.93px;font-size:30px;color:#000;letter-spacing:-2.0029px;">    }</div>
<div class="t mono" style="left:874.00px;top:702.00px;font-size:30px;color:#000;letter-spacing:-2.0029px;">}</div>
<div class="t mono" style="left:1704.00px;top:633.86px;font-size:30px;color:#000;letter-spacing:-2.0029px;"><span class="st">'Nginx PHP MySQL'</span>);</div>
<div class="a" style="left:1594px;top:630px;width:110px;height:34px;background:#fff;"></div>
<div class="a" style="left:1598px;top:634px;width:102px;height:26px;background:#efefef;border-radius:7px"></div>
<div class="t" style="left:1607.00px;top:630.93px;font-size:26.3px;color:#7a7a7a;font-weight:normal;letter-spacing:1.2px;">actual:</div>
<div class="t" style="left:164.50px;top:1224.73px;font-size:22.4px;color:#1a1a1a;font-weight:normal;">Run</div>
<div class="t" style="left:248.00px;top:1224.56px;font-size:22.6px;color:#1a1a1a;font-weight:normal;">test</div>
<div class="t" style="left:300.50px;top:1322.84px;font-size:27.0px;color:#1a1a1a;font-weight:normal;">Test Results</div>
<div class="t" style="left:700.00px;top:1327.07px;font-size:22.0px;color:#333;font-weight:normal;">10ms</div>
<div class="t" style="left:340.00px;top:1357.70px;font-size:28.7px;color:#1a1a1a;font-weight:normal;width:350px;overflow:hidden;height:40px">/var/www/html/web/app/tests</div>
<div class="t" style="left:700.00px;top:1363.37px;font-size:22.0px;color:#8a8a8a;font-weight:normal;">10ms</div>
<div class="t" style="left:380.50px;top:1393.51px;font-size:28.1px;color:#1a1a1a;font-weight:normal;">AppTest\Acme\FooTest</div>
<div class="t" style="left:700.00px;top:1398.67px;font-size:22.0px;color:#8a8a8a;font-weight:normal;">10ms</div>
<div class="t" style="left:1667.50px;top:1273.84px;font-size:27.0px;color:#1a1a1a;font-weight:normal;letter-spacing:0.25px;">1 test passed</div>
<div class="t" style="left:1840.00px;top:1273.84px;font-size:27.0px;color:#8c8c8c;font-weight:normal;letter-spacing:0.2px;">- 10ms</div>
<div class="t mono" style="left:785.50px;top:1319.42px;font-size:30px;color:#000;letter-spacing:-2.0029px;">PHPUnit 6.3.0 by Sebastian Bergmann and contributors.</div>
<div class="t mono" style="left:785.50px;top:1455.62px;font-size:30px;color:#000;letter-spacing:-2.0029px;">Time: 7.09 seconds, Memory: 6.00MB</div>
<div class="t mono" style="left:785.50px;top:1522.72px;font-size:30px;color:#000;letter-spacing:-2.0029px;">OK (1 test, 1 assertion)</div>
<div class="t mono" style="left:785.50px;top:1591.02px;font-size:30px;color:#000;letter-spacing:-2.0029px;">Generating code coverage report in HTML format ... done</div>
<div class="t mono" style="left:785.50px;top:1658.52px;font-size:30px;color:#000080;letter-spacing:-2.0029px;">Process finished with exit code 0</div>
<div class="t" style="left:205.50px;top:1737.03px;font-size:22.4px;color:#1a1a1a;font-weight:normal;"><span style="text-decoration:underline;text-underline-offset:3px">4</span>: Run</div>
<div class="t" style="left:344.00px;top:1736.86px;font-size:22.6px;color:#1a1a1a;font-weight:normal;"><span style="text-decoration:underline;text-underline-offset:3px">5</span>: Debug</div>
<div class="t" style="left:513.50px;top:1737.03px;font-size:22.4px;color:#1a1a1a;font-weight:normal;"><span style="text-decoration:underline;text-underline-offset:3px">6</span>: TODO</div>
<div class="t" style="left:682.00px;top:1736.78px;font-size:22.7px;color:#1a1a1a;font-weight:normal;"><span style="text-decoration:underline;text-underline-offset:3px">9</span>: Version Control</div>
<div class="t" style="left:944.50px;top:1736.53px;font-size:23.0px;color:#1a1a1a;font-weight:normal;">Terminal</div>
<div class="t" style="left:1110.50px;top:1737.03px;font-size:22.4px;color:#1a1a1a;font-weight:normal;">Docker</div>
<div class="t" style="left:2828.50px;top:1738.17px;font-size:22.0px;color:#1a1a1a;font-weight:normal;letter-spacing:0.3px;">Event Log</div>
<div class="t" style="left:180.50px;top:1781.00px;font-size:22.8px;color:#1a1a1a;font-weight:normal;letter-spacing:0.33px;">Process finished with exit code 0</div>
<div class="t" style="left:2432.00px;top:1780.36px;font-size:22.6px;color:#1a1a1a;font-weight:normal;">16:1</div>
<div class="t" style="left:2494.50px;top:1780.36px;font-size:22.6px;color:#1a1a1a;font-weight:normal;">LF</div>
<div class="t" style="left:2552.00px;top:1780.36px;font-size:22.6px;color:#1a1a1a;font-weight:normal;">UTF-8</div>
<div class="t" style="left:2650.00px;top:1779.60px;font-size:23.5px;color:#1a1a1a;font-weight:normal;">Git: feature/phpunit</div>
<div class="t" style="left:122.26px;top:280.50px;font-size:22.3px;transform-origin:0 0;transform:rotate(-90deg)"><span style="text-decoration:underline;text-underline-offset:3px">1</span>: Project</div>
<div class="t" style="left:122.18px;top:475.80px;font-size:22.8px;transform-origin:0 0;transform:rotate(-90deg)"><span style="text-decoration:underline;text-underline-offset:3px">7</span>: Structure</div>
<div class="t" style="left:120.67px;top:1667.00px;font-size:22.9px;transform-origin:0 0;transform:rotate(-90deg)"><span style="text-decoration:underline;text-underline-offset:3px">2</span>: Favorites</div>
<div class="t" style="left:2982.47px;top:221.20px;font-size:22.5px;transform-origin:0 0;transform:rotate(90deg)">Database</div>
<div class="t" style="left:2364.00px;top:124.55px;font-size:22.5px;color:#111;font-weight:normal;letter-spacing:0.4px;">test</div>
</body></html>
